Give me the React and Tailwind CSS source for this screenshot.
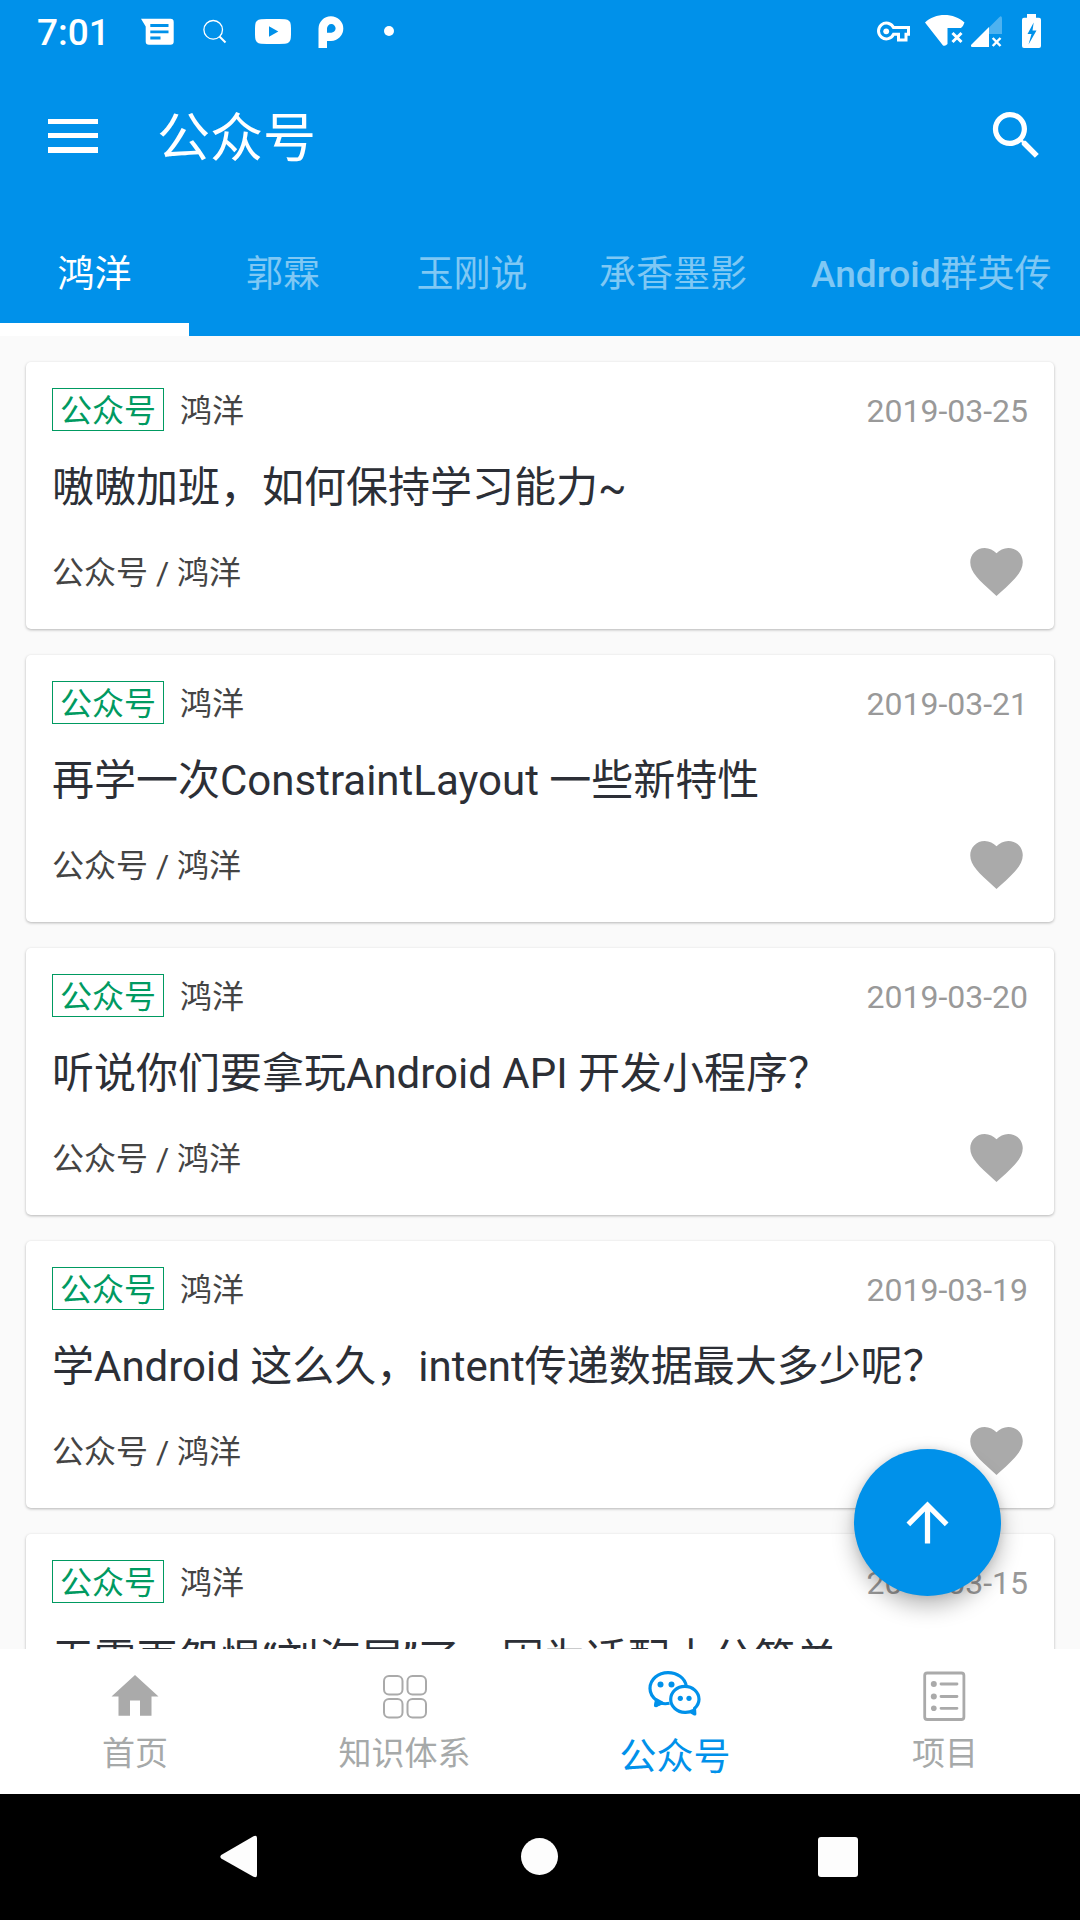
const articles = [
  { title: '嗷嗷加班，如何保持学习能力~', date: '2019-03-25' },
  { title: '再学一次ConstraintLayout 一些新特性', date: '2019-03-21' },
  { title: '听说你们要拿玩Android API 开发小程序？', date: '2019-03-20' },
  { title: '学Android 这么久，intent传递数据最大多少呢？', date: '2019-03-19' },
  { title: '无需再怨恨“刘海屏”了，因为适配十分简单', date: '2019-03-15' },
];

function StatusBar() {
  return (
    <div className="flex h-[64px] shrink-0 items-start text-white">
      <div className="ml-[37px] mt-[11px] w-[104px] text-[37px] leading-[44px] font-medium">7:01</div>
      <svg className="mt-[18px] h-[27px] w-[33px]" viewBox="141 18 33 27" fill="none">
        <path d="M141 18.7H170.5Q173.7 18.7 173.7 22V41.500Q173.700 44.700 170.500 44.700H149Q145.700 44.700 145.700 41.500V26.500Z" fill="#fff" />
        <path d="M150.300 25.500H168.500M150.300 31.800H168.500M150.300 38H160.500" stroke="#0091ea" strokeWidth="2.800" />
      </svg>
      <svg className="ml-[29px] mt-[19px] h-[26px] w-[25px]" viewBox="203 19 25 26" fill="none" stroke="#fff">
        <circle cx="213.200" cy="29.800" r="9.300" strokeWidth="1.300" />
        <path d="M219.500 36.500L225.500 42.500" strokeWidth="2" />
      </svg>
      <svg className="ml-[27px] mt-[19px] h-[26px] w-[36px]" viewBox="255 19 36 26">
        <path fillRule="evenodd" fill="#fff" d="M261 19.300Q273 18.500 285 19.300Q290.500 19.700 290.800 25Q291.300 31.500 290.800 38Q290.500 43.300 285 43.700Q273 44.500 261 43.700Q255.500 43.300 255.200 38Q254.700 31.500 255.200 25Q255.500 19.700 261 19.300ZM269 26.300V36.700L278.300 31.500Z" />
      </svg>
      <svg className="ml-[27px] mt-[15px] h-[34px] w-[26px]" viewBox="318 15 26 34">
        <path fillRule="evenodd" fill="#fff" d="M318.500 48V28.700A12.400 12.400 0 1 1 331 41H327V48ZM327 32.700H331A4.300 4.300 0 1 0 327 28.500Z" />
      </svg>
      <span className="ml-[40px] mt-[26px] size-[10px] rounded-full bg-white" />
      <svg className="ml-auto mt-[21px] h-[21px] w-[35px]" viewBox="876 21 35 21" fill="none" stroke="#fff">
        <path d="M893.500 27.500H908.500V34.200H906V39.900H898.500V34.200H893.600A7.900 7.900 0 1 1 893.500 27.500Z" strokeWidth="3" />
        <circle cx="886.200" cy="31.300" r="2.900" fill="#fff" stroke="none" />
      </svg>
      <svg className="ml-[13px] mt-[13px] h-[34px] w-[41px]" viewBox="924 13 41 34" fill="none">
        <path fill="#fff" d="M925 22.500C935 12.500 954 12.500 964.500 22.500Q963.500 26 961 28H947.500V44Q945.500 46.500 943 45.500Z" />
        <path d="M952.500 33L961.500 42M961.500 33L952.500 42" stroke="#fff" strokeWidth="3" />
      </svg>
      <svg className="ml-[6px] mt-[15px] h-[33px] w-[32px]" viewBox="971 15 32 33" fill="none">
        <path d="M989 27.500L999 17.500Q1002 14.500 1002 19V34H989Z" fill="#fff" opacity=".3" />
        <path d="M971 45L989 27V47H972Q970.500 46.300 971 45Z" fill="#fff" />
        <path d="M992.700 38L1000.500 46M1000.500 38L992.700 46" stroke="#fff" strokeWidth="2.500" />
      </svg>
      <svg className="ml-[19px] mr-[38px] mt-[14px] h-[34px] w-[20px]" viewBox="1022 14 20 34">
        <path fillRule="evenodd" fill="#fff" d="M1027 14H1036V17.700H1039Q1041 17.700 1041 19.700V46Q1041 48 1039 48H1024Q1022 48 1022 46V19.700Q1022 17.700 1024 17.700H1027ZM1033.700 22.500L1027.500 34H1031.500L1028.500 44.500L1036.500 30.500H1032.500Z" />
      </svg>
    </div>
  );
}

function Header() {
  return (
    <header className="flex h-[336px] shrink-0 flex-col bg-[#0091ea]">
      <StatusBar />
      <div className="flex h-[146px] shrink-0 items-start pt-[40px] pr-[32px]">
        <div className="ml-[48px] mt-[15px] flex w-[50px] flex-col gap-[9px]">
          <span className="h-[5px] bg-white" />
          <span className="h-[5px] bg-white" />
          <span className="h-[6px] bg-white" />
        </div>
        <h1 className="ml-[59px] text-[53px] leading-[70px] text-white">公众号</h1>
        <svg className="ml-auto size-[63px]" viewBox="0 0 24 24" fill="#fff">
          <path d="M15.500 14h-.79l-.28-.27C15.410 12.590 16 11.110 16 9.500 16 5.910 13.090 3 9.500 3S3 5.910 3 9.500 5.910 16 9.500 16c1.610 0 3.090-.59 4.230-1.570l.27.28v.79l5 4.990L20.490 19l-4.990-5zm-6 0C7.010 14 5 11.990 5 9.500S7.010 5 9.500 5 14 7.010 14 9.500 11.990 14 9.500 14z" />
        </svg>
      </div>
      <nav className="flex h-[126px] shrink-0 overflow-hidden text-[37px] leading-[130px] whitespace-nowrap text-white/50">
        <div className="h-[126px] w-[189px] shrink-0 border-b-[13px] border-white text-center text-white">鸿洋</div>
        <div className="w-[188px] shrink-0 text-center">郭霖</div>
        <div className="w-[190px] shrink-0 text-center">玉刚说</div>
        <div className="w-[212px] shrink-0 text-center">承香墨影</div>
        <div className="shrink-0 px-[32px]"><span className="font-medium">Android</span>群英传</div>
      </nav>
    </header>
  );
}

function Card({ title, date }) {
  return (
    <article className="flex h-[267px] shrink-0 flex-col rounded-[5px] bg-white px-[26px] pt-[26px] text-[32px] leading-[42px] text-[#444] shadow-[0_1px_3px_rgba(0,0,0,0.28)]">
      <div className="flex h-[43px] items-center">
        <span className="flex h-[43px] w-[112px] items-center justify-center border border-[#009a61] pt-[3px] text-[#009a61]">公众号</span>
        <span className="ml-[16px] pt-[3px]">鸿洋</span>
        <time className="ml-auto pt-[3px] text-[#999]">{date}</time>
      </div>
      <h2 className="mt-[27px] h-[60px] text-[42px] leading-[60px] whitespace-nowrap text-[#2c2f36]">{title}</h2>
      <div className="mt-[22px] flex h-[63px] items-center justify-between">
        <span className="pt-[2px]">公众号 / 鸿洋</span>
        <svg className="size-[63px]" viewBox="0 0 24 24" fill="#aaa">
          <path d="M12 21.350l-1.450-1.320C5.400 15.360 2 12.280 2 8.500 2 5.420 4.420 3 7.500 3c1.740 0 3.410.81 4.500 2.090C13.090 3.810 14.760 3 16.500 3 19.580 3 22 5.420 22 8.500c0 3.780-3.400 6.860-8.550 11.540L12 21.350z" />
        </svg>
      </div>
    </article>
  );
}

function BottomNav() {
  return (
    <nav className="grid h-[145px] shrink-0 grid-cols-4 bg-white pt-[20px] text-center text-[33px] text-[#a6a9a9]">
      <div className="flex flex-col items-center">
        <svg className="h-[56px] w-[60px]" viewBox="104.500 1669 60 56" fill="#aaa">
          <path d="M134.500 1675L158 1696.500H151V1715.700H139.500V1700.500H129.500V1715.700H118V1696.500H111Z" />
        </svg>
        <span className="mt-[9px] leading-[40px]">首页</span>
      </div>
      <div className="flex flex-col items-center">
        <svg className="h-[56px] w-[60px]" viewBox="375 1669 60 56" fill="none" stroke="#aaa" strokeWidth="2">
          <rect x="384" y="1676" width="18.500" height="18.500" rx="5" />
          <rect x="407.500" y="1676" width="18.500" height="18.500" rx="5" />
          <rect x="384" y="1699" width="18.500" height="18.500" rx="5" />
          <rect x="407.500" y="1699" width="18.500" height="18.500" rx="5" />
        </svg>
        <span className="mt-[9px] mr-px leading-[40px]">知识体系</span>
      </div>
      <div className="flex flex-col items-center text-[37px] text-[#0091ea]">
        <svg className="h-[56px] w-[60px]" viewBox="645 1669 60 56" fill="none" stroke="currentColor" strokeWidth="3.200" strokeLinejoin="round">
          <path d="M669.500 1703.300Q664.500 1704.300 660.500 1703L656 1705.500L656.800 1700.500Q650 1695.500 650 1688.500C650 1679 658.500 1672.600 668 1672.600C677 1672.600 685 1678 686.200 1686" />
          <path d="M656.500 1700L655.500 1705.500L662 1703Z" fill="currentColor" />
          <path d="M693.500 1710.500Q689.500 1712.500 684.800 1712.300C677 1712.300 670.700 1706.500 670.700 1699.300C670.700 1692 677 1686.300 684.800 1686.300C692.600 1686.300 699 1692 699 1699.300Q699 1704.500 694.500 1708.500L694.800 1714L690.500 1711.500" />
          <g fill="currentColor" stroke="none">
            <circle cx="660.500" cy="1684.500" r="3" /><circle cx="671.500" cy="1684.500" r="3" />
            <circle cx="680.300" cy="1698.300" r="2.600" /><circle cx="689" cy="1698.300" r="2.600" />
          </g>
        </svg>
        <span className="mt-[13px] leading-[40px]">公众号</span>
      </div>
      <div className="flex flex-col items-center">
        <svg className="h-[56px] w-[60px]" viewBox="915 1669 60 56" fill="none" stroke="#aaa" strokeLinecap="round">
          <rect x="924.700" y="1673" width="39.200" height="46.500" rx="2.500" strokeWidth="2.800" />
          <path d="M941 1684H957M941 1696.500H957M941 1708.300H957" strokeWidth="2.800" />
          <g fill="#aaa" stroke="none">
            <circle cx="933.800" cy="1684" r="3" /><circle cx="933.800" cy="1696.500" r="3" /><circle cx="933.800" cy="1708.300" r="2.800" />
          </g>
        </svg>
        <span className="mt-[9px] leading-[40px]">项目</span>
      </div>
    </nav>
  );
}

function SystemBar() {
  return (
    <div className="flex h-[126px] shrink-0 items-center bg-black pl-[220px]">
      <svg className="h-[44px] w-[38px]" viewBox="0 0 38 44" fill="#fdfdfd">
        <path d="M1.200 20L33.500 1.200Q37 -.3 37 3V40Q37 43.300 33.500 41.800L1.200 23.500Q-.6 21.800 1.200 20Z" />
      </svg>
      <span className="mb-px ml-[263px] size-[37px] rounded-full bg-[#fdfdfd]" />
      <span className="ml-[260px] size-[40px] rounded-[3px] bg-[#fdfdfd]" />
    </div>
  );
}

export default function App() {
  return (
    <div className="relative flex h-[1920px] w-[1080px] flex-col overflow-hidden bg-[#fafafa] font-['Roboto','Noto_Sans_CJK_SC',sans-serif]" lang="zh-CN">
      <Header />
      <main className="flex min-h-0 flex-1 flex-col gap-[26px] overflow-hidden px-[26px] pt-[26px]">
        {articles.map((article) => <Card key={article.date} {...article} />)}
      </main>
      <BottomNav />
      <SystemBar />
      <button aria-label="Back to top" className="absolute top-[1449px] left-[854px] flex size-[147px] items-center justify-center rounded-full bg-[#0091ea] shadow-[0_10px_22px_rgba(0,0,0,0.28),0_0_8px_rgba(0,0,0,0.1)]">
        <svg className="size-[63px]" viewBox="0 0 24 24" fill="#fff">
          <path d="M4 12l1.410 1.410L11 7.830V20h2V7.830l5.580 5.590L20 12l-8-8-8 8z" />
        </svg>
      </button>
    </div>
  );
}
